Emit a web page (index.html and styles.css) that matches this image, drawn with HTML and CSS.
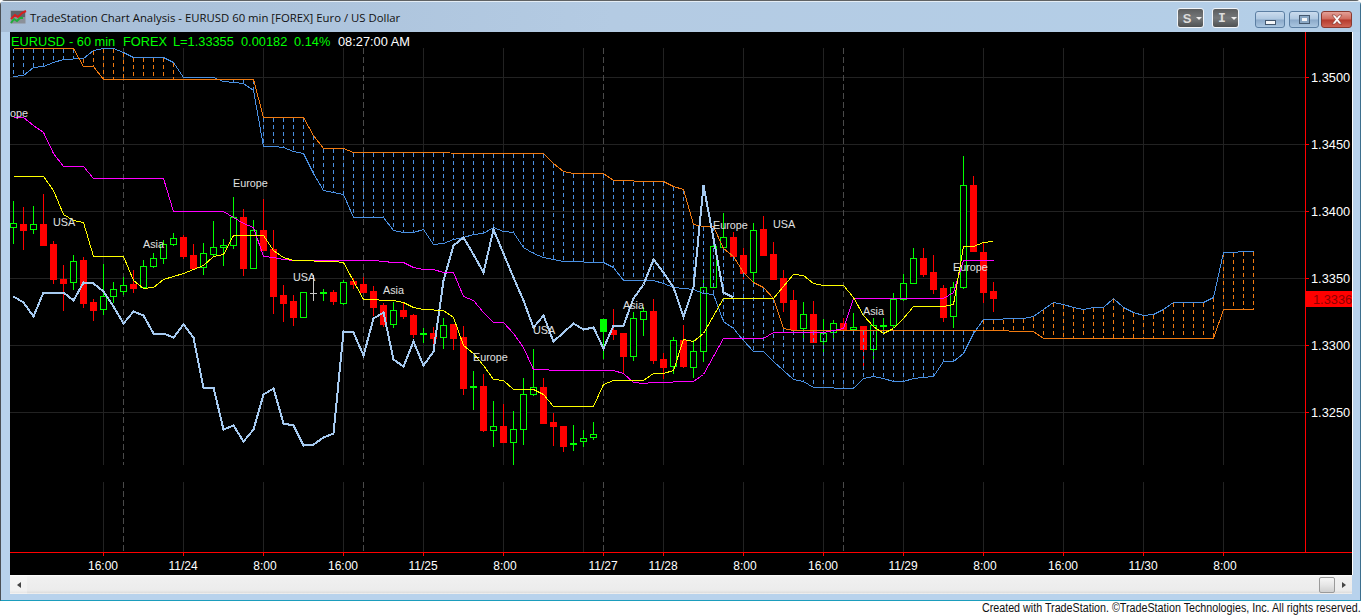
FILE: index.html
```html
<!DOCTYPE html>
<html lang="en">
<head>
<meta charset="utf-8">
<title>TradeStation Chart Analysis</title>
<link rel="stylesheet" href="styles.css">
</head>
<body>
<div class="window">
  <header class="titlebar">
    <svg class="app-icon" width="17" height="16" viewBox="0 0 17 16">
      <rect x="0.5" y="1.5" width="15" height="13" fill="#8b9098"/>
      <rect x="1" y="2" width="14" height="6" fill="#5f6368"/>
      <polyline points="1,10 5,6 8,8 12,4 16,2" fill="none" stroke="#d81e1e" stroke-width="2"/>
      <polyline points="1,14 4,10 7,12 10,9 13,9" fill="none" stroke="#1fae3a" stroke-width="2"/>
    </svg>
    <span class="title-text">TradeStation Chart Analysis - EURUSD 60 min [FOREX] Euro / US Dollar</span>
    <div class="tool-buttons">
      <button class="tool-btn"><b class="tool-letter">S</b><i class="caret"></i></button>
      <button class="tool-btn"><b class="tool-letter slab">I</b><i class="caret"></i></button>
    </div>
    <div class="caption-buttons">
      <button class="cap-btn"><i class="glyph-min"></i></button>
      <button class="cap-btn cap-max"><i class="glyph-max"></i></button>
      <button class="cap-btn cap-close">
        <svg width="16" height="11" viewBox="0 0 16 11"><path d="M3 1h3l2 2.500 2-2.500h3l-3.500 4.500 3.500 4.500h-3l-2-2.500-2 2.500h-3l3.500-4.500z" fill="#fff" stroke="#7a2a22" stroke-width="0.6"/></svg>
      </button>
    </div>
  </header>
  <main class="chart-frame">
    <svg id="chart" class="chart" width="1342" height="543" viewBox="10 32 1342 543">
      <g id="grid"></g>
      <g id="candles"></g>
      <g id="lines"></g>
      <text class="info" y="46"><tspan class="info-green" x="11">EURUSD</tspan><tspan class="info-green" x="69">- 60 min</tspan><tspan class="info-green" x="123">FOREX</tspan><tspan class="info-green" x="173">L=1.33355</tspan><tspan class="info-green" x="241">0.00182</tspan><tspan class="info-green" x="294">0.14%</tspan><tspan class="info-white" x="338">08:27:00 AM</tspan></text>
      <g id="labels"></g>
      <g id="axes"></g>
    </svg>
  </main>
  <div class="scrollbar">
    <div class="arrow-cell"><i class="arrow-left"></i></div>
    <div class="track"></div>
    <div class="thumb"></div>
    <div class="arrow-cell right"><i class="arrow-right"></i></div>
  </div>
</div>
<footer class="credit"><span class="credit-text">Created with TradeStation. ©TradeStation Technologies, Inc. All rights reserved.</span></footer>
<script src="chart.js"></script>
</body>
</html>
```
FILE: styles.css
```css
* { box-sizing: border-box; }
html, body { margin: 0; padding: 0; }
body {
  width: 1362px;
  height: 615px;
  overflow: hidden;
  background: #fff;
  font-family: "Liberation Sans", Arial, sans-serif;
}
.window {
  width: 1361px;
  height: 601px;
  display: flex;
  flex-direction: column;
  padding: 0 8px 6px 9px;
  background: #b8d2ec;
  border: 1px solid #4a4f55;
  border-bottom: 1px solid #1b9dbd;
  border-right-color: #3d6f8e;
  border-top-color: #5f6264;
  border-radius: 5px 5px 0 0;
}
.titlebar {
  height: 31px;
  margin: 0 -8px 0 -9px;
  padding: 0 9px 0 9px;
  display: flex;
  align-items: center;
  background: linear-gradient(90deg, #a6bdd6 0%, #b4cbe3 45%, #b4cfe8 100%);
  border-top: 1px solid #e4edf5;
}
.app-icon { margin-right: 3px; flex: none; }
.title-text {
  font-family: "Open Sans", "Noto Sans", sans-serif;
  font-size: 11.35px;
  color: #111;
  white-space: nowrap;
  flex: 1;
}
.tool-buttons { display: flex; gap: 8px; margin-right: 16px; margin-top: 6px; align-self: flex-start; }
.tool-btn {
  width: 27px;
  height: 20px;
  padding: 0 0 0 4px;
  display: flex;
  align-items: center;
  justify-content: flex-start;
  border: 1px solid #f2f5f8;
  border-radius: 3px;
  background: linear-gradient(180deg, #5b5d5e 0%, #75787a 50%, #4e5152 100%);
}
.tool-letter {
  width: 10px;
  font: bold 13px "Liberation Sans", Arial, sans-serif;
  color: #dcdcdc;
  text-align: center;
}
.slab { font-family: "Liberation Mono", monospace; }
.caret {
  width: 0;
  height: 0;
  margin-left: 4px;
  border-left: 3px solid transparent;
  border-right: 3px solid transparent;
  border-top: 3px solid #eee;
}
.caption-buttons { display: flex; gap: 2px; align-self: flex-start; margin-top: 9px; margin-right: -1px; }
.cap-btn {
  width: 30px;
  height: 17px;
  padding: 0;
  display: flex;
  align-items: center;
  justify-content: center;
  border: 1px solid #5c7fa3;
  border-radius: 3px;
  background: linear-gradient(180deg, #cbdcee 0%, #aec7e0 48%, #8ba9c9 52%, #aac6e0 100%);
}
.cap-max { margin-left: 2px; }
.cap-close {
  width: 31px;
  border-color: #8a3a30;
  background: linear-gradient(180deg, #e3a198 0%, #cf6a5c 48%, #b53a2c 52%, #cf6555 100%);
}
.glyph-min {
  width: 11px;
  height: 5px;
  margin-top: 5px;
  background: #f4f6f8;
  border: 1px solid #44586e;
}
.glyph-max {
  width: 11px;
  height: 9px;
  background: #f4f6f8;
  border: 1px solid #44586e;
  box-shadow: inset 0 0 0 2px #8aa7c4;
}
.chart-frame {
  flex: none;
  width: 1343px;
  height: 543px;
  border-right: 1px solid #fff;
}
.chart { display: block; background: #000; shape-rendering: crispEdges; }
.info { font-size: 12.8px; }
.info-green { fill: #00ff00; }
.info-white { fill: #fff; }
.session { font-size: 10.8px; fill: #e0e0e0; text-anchor: start; }
.price { font-size: 12.8px; fill: #fff; }
.time { font-size: 12px; fill: #fff; text-anchor: middle; }
.tag-text { font-size: 12.8px; fill: #8c0000; }
.scrollbar {
  flex: none;
  width: 1342px;
  height: 19px;
  display: flex;
  align-items: center;
  background: linear-gradient(180deg, #fff 0, #f0f0f0 10%, #ececec 80%, #dcdcdc 95%, #fff 100%);
}
.track { flex: 1; }
.arrow-cell {
  width: 17px;
  height: 100%;
  display: flex;
  align-items: center;
  justify-content: center;
  background: rgba(255, 255, 255, 0.3);
}
.arrow-cell.right { background: transparent; }
.arrow-left { border: 3.500px solid transparent; border-left: 0; border-right: 4px solid #444; }
.arrow-right { border: 3.500px solid transparent; border-right: 0; border-left: 4px solid #444; }
.thumb {
  width: 16px;
  height: 16px;
  border: 1px solid #9a9a9a;
  border-radius: 2px;
  background: linear-gradient(180deg, #f6f6f6 0%, #e6e6e6 50%, #d0d0d0 100%);
}
.credit {
  height: 14px;
  display: flex;
  justify-content: flex-end;
  align-items: flex-start;
  white-space: nowrap;
  padding-right: 1px;
}
.credit-text {
  display: block;
  font-size: 12px;
  line-height: 14px;
  color: #111;
  transform: scaleX(0.894);
  transform-origin: right center;
}
```
FILE: chart.js
```js
(function () {
  var NS = 'http://www.w3.org/2000/svg';
  function el(parent, name, attrs, text) {
    var n = document.createElementNS(NS, name);
    for (var k in attrs) n.setAttribute(k, attrs[k]);
    if (text) n.textContent = text;
    parent.appendChild(n);
    return n;
  }
  function $(id) { return document.getElementById(id); }
  function seq(ys) { return ys.map(function (y, i) { return [13 + 10 * i, y]; }); }
  function pts(list) { return list.map(function (p) { return (p[0] + 0.5) + ',' + (p[1] + 0.5); }).join(' '); }
  function at(list, x) {
    for (var i = 1; i < list.length; i++) {
      if (x <= list[i][0]) {
        var a = list[i - 1], b = list[i];
        return a[1] + (b[1] - a[1]) * (x - a[0]) / (b[0] - a[0]);
      }
    }
    return list[list.length - 1][1];
  }

  // [high, low, bodyTop, bodyBottom, kind]: g hollow green, r red, d green doji, f filled green, w white doji
  var candles = [
    [201,243,223,227,'g'],[207,249,224,230,'r'],[206,233,224,229,'g'],[194,245,224,245,'r'],[241,283,244,279,'r'],
    [265,310,279,283,'r'],[255,289,261,282,'g'],[257,307,260,303,'r'],[299,320,302,310,'r'],[264,314,296,309,'g'],
    [282,302,289,296,'g'],[277,294,285,291,'g'],[270,292,284,288,'r'],[260,288,266,287,'g'],[253,267,258,266,'g'],
    [240,263,244,258,'g'],[233,245,238,244,'g'],[235,258,237,256,'r'],[244,268,255,268,'r'],[243,274,253,267,'g'],
    [221,255,247,254,'g'],[239,265,245,247,'g'],[197,248,217,245,'g'],[209,275,217,268,'r'],[220,268,230,268,'g'],
    [199,250,230,250,'r'],[230,313,249,296,'r'],[285,321,295,303,'r'],[295,325,301,317,'r'],[292,317,292,317,'g'],
    [275,300,293,293,'w'],[289,300,292,293,'d'],[290,304,292,301,'r'],[280,304,282,303,'g'],[278,288,281,284,'r'],
    [277,292,284,292,'r'],[286,315,291,307,'r'],[303,326,305,324,'r'],[302,327,310,324,'g'],[303,318,310,316,'r'],
    [314,337,315,334,'r'],[328,342,333,334,'d'],[327,347,333,338,'r'],[318,348,325,337,'g'],[324,349,324,338,'r'],
    [326,394,337,388,'r'],[371,409,386,387,'d'],[374,431,386,430,'r'],[401,446,426,430,'g'],[404,442,426,442,'r'],
    [411,464,429,442,'g'],[378,444,394,429,'g'],[349,395,387,394,'g'],[378,423,387,423,'r'],[413,445,422,426,'r'],
    [426,451,426,446,'r'],[425,450,443,444,'d'],[430,446,438,441,'g'],[422,439,434,437,'g'],[319,358,319,331,'f'],
    [309,339,330,334,'r'],[333,373,333,356,'r'],[312,360,318,356,'g'],[307,335,311,319,'g'],[299,363,311,360,'r'],
    [353,378,359,367,'r'],[337,373,340,366,'g'],[325,367,340,366,'r'],[340,377,351,367,'g'],[280,361,287,351,'g'],
    [238,287,246,287,'g'],[213,248,237,247,'g'],[232,256,237,256,'r'],[248,278,255,273,'r'],[223,282,230,272,'g'],
    [216,255,229,255,'r'],[242,279,254,279,'r'],[270,311,278,302,'r'],[290,330,300,329,'r'],[302,340,314,328,'g'],
    [301,342,314,342,'r'],[319,353,333,341,'g'],[320,338,323,332,'g'],[318,334,323,330,'r'],[313,330,327,329,'g'],
    [326,367,326,349,'r'],[318,362,325,349,'g'],[318,332,325,326,'d'],[293,327,299,325,'g'],[274,300,283,299,'g'],
    [248,283,258,283,'g'],[248,276,258,274,'r'],[255,293,272,289,'r'],[285,321,288,317,'r'],[282,327,287,316,'g'],
    [156,288,185,287,'g'],[176,251,185,251,'r'],[242,302,252,292,'r'],[282,311,291,298,'r']
  ];

  var thick = seq([296,302,316,292,292,292,300,282,283,291,306,323,311,315,333,333,337,324,337,387,387,429,425,441,429,394,388,423,425,445,444,437,433,331,332,355,318,312,359,366,341,365,351,280,245,237,254,272,229,253,277,300,327,315,341,332,323,329,327,348,325,325,298,284,259,272,287,316,287,185,238,292,297]);

  var magenta = [[13,117],[23,117],[33,125],[43,132],[53,153],[63,166],[83,166],[93,178],[163,178],[173,211],[223,211],[233,217],[243,223],[253,227],[263,256],[273,257],[283,259],[293,260],[333,260],[373,260],[393,262],[403,262],[413,267],[423,269],[433,269],[443,272],[453,272],[463,296],[473,300],[483,312],[493,322],[503,322],[513,333],[523,347],[533,369],[563,370],[613,370],[623,373],[633,382],[643,383],[653,382],[693,381],[703,374],[723,338],[763,338],[773,332],[823,332],[843,328],[853,298],[943,298],[953,292],[963,260],[993,260]];

  var yellow = [[13,176],[43,176],[53,190],[63,214],[73,220],[83,222],[93,256],[123,256],[133,280],[143,288],[153,287],[163,279],[173,276],[183,273],[193,269],[203,265],[213,256],[223,254],[233,235],[263,235],[273,250],[283,257],[293,260],[333,261],[343,262],[363,299],[393,300],[403,302],[413,307],[423,309],[443,310],[453,317],[463,345],[473,353],[483,365],[493,379],[503,380],[513,389],[533,389],[543,394],[553,406],[593,406],[603,384],[613,380],[643,380],[653,373],[663,373],[673,370],[683,339],[693,341],[703,333],[723,298],[773,298],[793,274],[803,275],[813,283],[823,285],[843,285],[853,297],[863,315],[873,326],[883,333],[893,328],[903,318],[913,306],[943,306],[953,304],[963,246],[973,246],[983,242],[993,241]];

  var blue = [[13,76],[23,75],[33,67],[43,66],[53,62],[63,59],[83,58],[93,50],[103,48],[113,48],[123,52],[133,57],[163,57],[173,62],[183,77],[213,77],[223,81],[233,82],[243,83],[253,90],[263,146],[273,146],[283,147],[293,151],[303,153],[313,173],[323,190],[333,192],[343,194],[353,217],[383,217],[393,230],[403,232],[413,232],[423,229],[433,244],[443,243],[453,239],[463,237],[473,234],[483,233],[493,227],[503,231],[513,232],[523,247],[533,253],[543,257],[553,259],[563,261],[603,262],[613,267],[623,280],[653,280],[663,283],[673,287],[693,289],[703,293],[713,294],[723,321],[733,328],[743,340],[753,351],[763,351],[773,361],[783,370],[793,379],[803,381],[813,387],[853,388],[863,378],[873,376],[883,378],[893,381],[903,381],[913,378],[933,376],[943,361],[953,361],[963,353],[973,333],[983,319],[1023,318],[1033,316],[1043,309],[1053,302],[1063,304],[1073,307],[1083,309],[1093,307],[1103,307],[1113,298],[1123,307],[1133,312],[1143,315],[1153,314],[1163,309],[1173,302],[1203,302],[1213,297],[1223,252],[1233,252],[1243,251],[1253,251]];

  var orange = [[13,48],[73,48],[83,66],[93,66],[103,79],[253,79],[263,117],[303,117],[313,135],[323,148],[343,148],[353,152],[543,153],[553,163],[563,171],[573,173],[603,173],[613,180],[653,181],[663,181],[673,186],[683,189],[693,224],[703,226],[713,226],[723,248],[733,256],[743,272],[753,282],[763,287],[773,298],[783,328],[793,330],[1003,330],[1013,331],[1033,331],[1043,338],[1213,338],[1223,309],[1253,309]];

  var labels = [['ope',10,117],['USA',53,226],['Asia',143,248],['Europe',233,187],['USA',293,281],['Asia',383,294],['Europe',473,361],['USA',533,334],['Asia',623,309],['Europe',713,229],['USA',773,228],['Asia',863,315],['Europe',953,271]];

  // grid
  var grid = $('grid'), red = '#ff0000';
  [77,144,211,278,345,412].forEach(function (y) {
    el(grid, 'line', { x1: 10, x2: 1305, y1: y + 0.5, y2: y + 0.5, stroke: '#222' });
  });
  [103,183,263,343,423,503,583,663,743,823,903,983,1063,1143,1223].forEach(function (x) {
    el(grid, 'line', { x1: x + 0.5, x2: x + 0.5, y1: 48, y2: 465, stroke: '#222' });
    el(grid, 'line', { x1: x + 0.5, x2: x + 0.5, y1: 482, y2: 552, stroke: '#222' });
  });
  [123,363,603,843].forEach(function (x) {
    el(grid, 'line', { x1: x + 0.5, x2: x + 0.5, y1: 48, y2: 465, stroke: '#4a4a4a', 'stroke-dasharray': '6 3' });
    el(grid, 'line', { x1: x + 0.5, x2: x + 0.5, y1: 482, y2: 552, stroke: '#4a4a4a', 'stroke-dasharray': '6 3' });
  });

  // candles
  var cg = $('candles');
  candles.forEach(function (c, i) {
    var x = 13 + 10 * i, kind = c[4];
    var color = kind === 'r' ? '#ff0000' : kind === 'w' ? '#c8c8c8' : '#00ff00';
    el(cg, 'line', { x1: x + 0.5, x2: x + 0.5, y1: c[0], y2: c[1] + 1, stroke: color });
    if (kind === 'g') {
      el(cg, 'rect', { x: x - 2.5, y: c[2] + 0.5, width: 6, height: Math.max(c[3] - c[2], 1), fill: '#000', stroke: color });
    } else {
      var h = Math.max(c[3] - c[2] + 1, kind === 'w' ? 1 : 2);
      el(cg, 'rect', { x: x - 3, y: c[2], width: 7, height: h, fill: color });
    }
  });

  // cloud and indicator lines
  var lg = $('lines'), blueC = '#4a90e2', orangeC = '#f07a10';
  for (var x = 13; x <= 1253; x += 10) {
    var b = at(blue, x), o = at(orange, x);
    var top = Math.min(b, o), bot = Math.max(b, o);
    if (bot - top < 3) continue;
    el(lg, 'line', { x1: x + 0.5, x2: x + 0.5, y1: top + 1, y2: bot, stroke: b > o ? blueC : orangeC, 'stroke-dasharray': '4 3' });
  }
  [[blue, blueC, 1], [orange, orangeC, 1], [thick, '#a6caf0', 2], [magenta, '#ff00ff', 1], [yellow, '#ffff00', 1]].forEach(function (s) {
    el(lg, 'polyline', { points: pts(s[0]), fill: 'none', stroke: s[1], 'stroke-width': s[2] });
  });

  // session labels
  var tg = $('labels');
  labels.forEach(function (l) {
    el(tg, 'text', { class: 'session', x: l[1], y: l[2] }, l[0]);
  });

  // axes
  var ax = $('axes');
  el(ax, 'line', { x1: 1305.5, x2: 1305.5, y1: 32, y2: 552, stroke: red });
  el(ax, 'line', { x1: 10, x2: 1352, y1: 552.5, y2: 552.5, stroke: red });
  [['1.3500',77],['1.3450',144],['1.3400',211],['1.3350',278],['1.3300',345],['1.3250',412]].forEach(function (p) {
    el(ax, 'line', { x1: 1305, x2: 1309, y1: p[1] + 0.5, y2: p[1] + 0.5, stroke: red });
    el(ax, 'text', { class: 'price', x: 1311, y: p[1] + 5 }, p[0]);
  });
  el(ax, 'rect', { x: 1306, y: 291, width: 46, height: 16, fill: red });
  el(ax, 'text', { class: 'tag-text', x: 1313, y: 304 }, '1.3336');
  [['16:00',103,103],['11/24',183,183],['8:00',263,265],['16:00',343,343],['11/25',423,423],['8:00',503,505],['11/27',603,603],['11/28',663,663],['8:00',743,745],['16:00',823,823],['11/29',903,903],['8:00',983,985],['16:00',1063,1063],['11/30',1143,1143],['8:00',1223,1225]].forEach(function (t) {
    el(ax, 'line', { x1: t[1] + 0.5, x2: t[1] + 0.5, y1: 553, y2: 556, stroke: red });
    el(ax, 'text', { class: 'time', x: t[2], y: 570 }, t[0]);
  });
})();
```
